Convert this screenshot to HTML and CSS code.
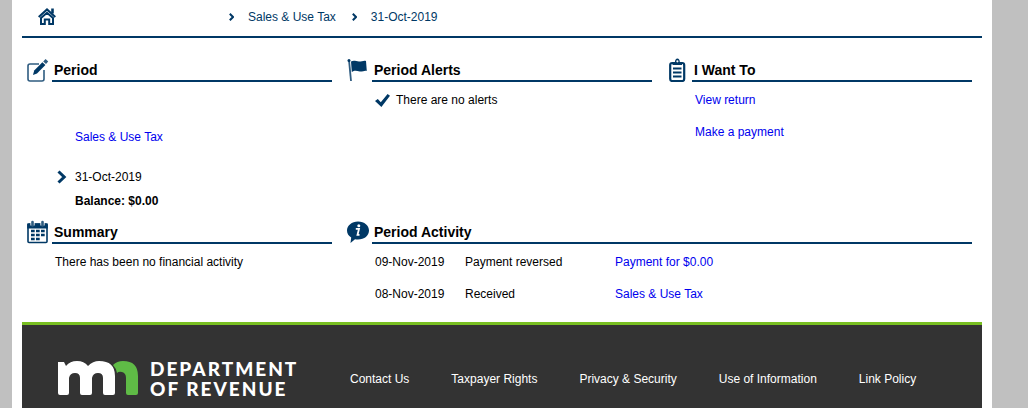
FILE: index.html
```html
<!DOCTYPE html>
<html lang="en">
  <head>
    <meta charset="UTF-8" />
    <meta name="viewport" content="width=device-width, initial-scale=1.0" />
    <title>Sales &amp; Use Tax - 31-Oct-2019</title>
    <link rel="stylesheet" href="styles.css">
  </head>
  <body>
    <div class="page">
      <nav class="breadcrumb" aria-label="Breadcrumb">
        <a class="home" href="#" aria-label="Home">
          <svg width="18" height="17" viewBox="0 0 18 17" fill="none" stroke="#003865">
            <path d="M0.700 9L9 1.400 17.300 9" stroke-width="2" />
            <path d="M14.500 0.500v5" stroke-width="2.600" />
            <path d="M3 10l6-5.200L15 10v6h-3.800v-4.600H6.800V16H3z" stroke-width="2" />
          </svg>
        </a>
        <svg class="sep" width="5" height="8" viewBox="0 0 5 8"><path d="M0.8 0.8L4 4 0.8 7.2" /></svg>
        <a href="#">Sales &amp; Use Tax</a>
        <svg class="sep" width="5" height="8" viewBox="0 0 5 8"><path d="M0.8 0.8L4 4 0.8 7.2" /></svg>
        <span>31-Oct-2019</span>
      </nav>

      <main class="panels">
        <section class="panel">
          <div class="panel-head">
            <svg width="22" height="24" viewBox="0 0 22 24">
              <path d="M12 6H3Q1 6 1 8v13q0 2 2 2h12q2 0 2-2v-9" fill="none" stroke="#2f5c80" stroke-width="1.600" />
              <path d="M6 17l1.200-4.400L15.400 4.200l3 2.800L10 15.400z" fill="#003865" />
              <path d="M16.200 3.400L18.600 1l2.600 2.400-2.200 2.600z" fill="#2f5c80" />
            </svg>
            <h2>Period</h2>
          </div>
          <div class="period">
            <a href="#">Sales &amp; Use Tax</a>
            <div class="current">
              <svg width="10" height="14" viewBox="0 0 10 14"><path d="M1.500 1.500L7.200 7 1.500 12.500" /></svg>
              <span>31-Oct-2019</span>
            </div>
            <strong>Balance: $0.00</strong>
          </div>
        </section>

        <section class="panel">
          <div class="panel-head">
            <svg width="22" height="24" viewBox="0 0 22 24">
              <path d="M2 2l2 21" stroke="#2f5c80" stroke-width="1.800" />
              <circle cx="2" cy="2.500" r="1.500" fill="#003865" />
              <path d="M4 3.500c3-1.500 5 0 8 0 3 0 5-1.500 7-.5l.8 10c-2-1-4 .8-7 .5-3-.5-5-1.500-8 .5z" fill="#003865" />
            </svg>
            <h2>Period Alerts</h2>
          </div>
          <p class="line alert">
            <svg width="15" height="13" viewBox="0 0 15 13"><path d="M0 7l2.800-2 3 3.200L12.600 0 15 1.800 6.400 13z" fill="#003865" /></svg>
            There are no alerts
          </p>
        </section>

        <section class="panel">
          <div class="panel-head">
            <svg width="22" height="24" viewBox="0 0 22 24">
              <rect x="3.200" y="5" width="14" height="18" rx="2" fill="none" stroke="#003865" stroke-width="2.200" />
              <path d="M5.500 7V4h2.400q.3-3.600 2.500-3.600T12.800 4h2.200v3z" fill="#003865" />
              <circle cx="10.400" cy="3.300" r="1.100" fill="#fff" />
              <path d="M6 10.500h8.500M6 14.500h8.500M6 18.500h8.500" stroke="#003865" stroke-width="2" />
            </svg>
            <h2>I Want To</h2>
          </div>
          <ul class="actions">
            <li class="line"><a href="#">View return</a></li>
            <li class="line"><a href="#">Make a payment</a></li>
          </ul>
        </section>

        <section class="panel">
          <div class="panel-head">
            <svg width="22" height="24" viewBox="0 0 22 24">
              <rect x="1" y="4" width="19" height="18.500" rx="1" fill="#fff" stroke="#003865" stroke-width="1.600" />
              <path d="M0.200 3.500h20.600V8.500H0.200z" fill="#003865" />
              <path d="M5.500 1.500v4M15.500 1.500v4" stroke="#fff" stroke-width="4.200" />
              <path d="M5.500 2v3.500M15.500 2v3.500" stroke="#2f5c80" stroke-width="2.600" stroke-linecap="round" />
              <path d="M4 11h14M4 15h14M4 19h9" stroke="#003865" stroke-width="2.600" stroke-dasharray="3.700 1.300" />
            </svg>
            <h2>Summary</h2>
          </div>
          <p class="line">There has been no financial activity</p>
        </section>

        <section class="panel wide">
          <div class="panel-head">
            <svg width="22" height="24" viewBox="0 0 22 24">
              <path d="M11 1.500c6.500 0 11 4 11 9s-4.500 9-11 9c-1.200 0-2 0-3-.3L3.500 23l.7-5.600C1.400 15.800 0 13.300 0 10.500c0-5 4.800-9 11-9z" fill="#003865" />
              <circle cx="11.800" cy="5.800" r="1.500" fill="#fff" />
              <path d="M8.800 8.800h3.200l-1.500 6h2" fill="none" stroke="#fff" stroke-width="1.800" />
            </svg>
            <h2>Period Activity</h2>
          </div>
          <table class="activity">
            <tr>
              <td class="date">09-Nov-2019</td>
              <td class="status">Payment reversed</td>
              <td><a href="#">Payment for $0.00</a></td>
            </tr>
            <tr>
              <td class="date">08-Nov-2019</td>
              <td class="status">Received</td>
              <td><a href="#">Sales &amp; Use Tax</a></td>
            </tr>
          </table>
        </section>
      </main>

      <footer class="footer">
        <a class="logo" href="#">
          <svg width="80" height="35" viewBox="0 0 80 35" aria-hidden="true">
            <path d="M0 1h6l2 4Q12 0 19 0q7 0 11 5Q35 0 41 0q16 0 16 15v17q0 2-2 2h-8q-2 0-2-2V17q0-5-5-5t-6 5v15q0 2-2 2h-8q-2 0-2-2V17q0-5-5-5t-6 5v15q0 2-2 2H2q-2 0-2-2z" fill="#fff" />
            <path d="M55 4q4-4 10-4 15 0 15 15v17q0 2-2 2h-8q-2 0-2-2V17q0-5-4-6-3-1-5 1-1-5-4-8z" fill="#5fbb46" />
          </svg>
          <span class="logo-text">DEPARTMENT<br>OF REVENUE</span>
        </a>
        <nav class="footer-links" aria-label="Footer">
          <a href="#">Contact Us</a>
          <a href="#">Taxpayer Rights</a>
          <a href="#">Privacy &amp; Security</a>
          <a href="#">Use of Information</a>
          <a href="#">Link Policy</a>
        </nav>
      </footer>
    </div>
  </body>
</html>
```
FILE: styles.css
```css
* {
  box-sizing: border-box;
}
body {
  margin: 0;
  background-color: #c0c0c0;
  color: #000;
  font-family: "Liberation Sans", Arial, sans-serif;
  font-size: 12px;
}
a {
  color: #0000ee;
  text-decoration: none;
}
a:hover {
  text-decoration: underline;
}
svg {
  display: block;
  flex: none;
}
.page {
  display: flex;
  flex-direction: column;
  min-height: 100vh;
  margin: 0 36px 0 12px;
  padding: 0 10px;
  background-color: #fff;
}

/* Breadcrumb */
.breadcrumb {
  display: flex;
  align-items: center;
  height: 38px;
  padding: 0 16px 3px;
  border-bottom: 2px solid #003865;
  color: #003865;
}
.breadcrumb a {
  color: #003865;
}
.breadcrumb .home {
  width: 191px;
}
.sep {
  margin: 0 14px 0 16px;
  fill: none;
  stroke: #003865;
  stroke-width: 2;
}
.home + .sep {
  margin-left: 0;
}

/* Panels */
.panels {
  display: grid;
  grid-template-columns: repeat(3, 1fr);
}
.panel {
  padding: 20px 10px 0 30px;
}
.panel:nth-child(n + 4) {
  padding-top: 7px;
}
.wide {
  grid-column: span 2;
}
.panel-head {
  display: flex;
  margin: 0 0 2px -25px;
}
.panel-head svg {
  margin-right: 3px;
}
h2 {
  flex: 1;
  height: 24px;
  margin: 0;
  padding-left: 2px;
  border-bottom: 2px solid #003865;
  font-size: 14px;
  line-height: 24px;
}
.line {
  margin: 0 0 0 3px;
  line-height: 32px;
}
.alert {
  display: flex;
  align-items: center;
  gap: 6px;
}
.actions {
  margin: 0;
  padding: 0;
  list-style: none;
}
.period {
  display: flex;
  flex-direction: column;
  padding: 41px 0 0 23px;
  line-height: 24px;
}
.current {
  display: flex;
  align-items: center;
  gap: 8px;
  margin: 16px 0 0 -18px;
}
.current svg {
  fill: none;
  stroke: #003865;
  stroke-width: 3;
}
.activity {
  margin-left: 3px;
  border-collapse: collapse;
  line-height: 32px;
}
.activity td {
  padding: 0;
}
.activity .date {
  width: 90px;
}
.activity .status {
  width: 150px;
}

/* Footer */
.footer {
  display: flex;
  flex: 1;
  align-items: center;
  margin-top: 12px;
  padding: 28px 36px 4px;
  border-top: 3px solid #78be21;
  background-color: #333;
}
.footer a {
  color: #fff;
}
.logo {
  display: flex;
  align-items: center;
  gap: 12px;
  width: 292px;
}
.logo-text {
  font-family: Lato, "Liberation Sans", sans-serif;
  font-size: 19px;
  font-weight: 900;
  line-height: 20px;
  letter-spacing: 2px;
}
.footer-links {
  display: flex;
  gap: 42px;
}
```
